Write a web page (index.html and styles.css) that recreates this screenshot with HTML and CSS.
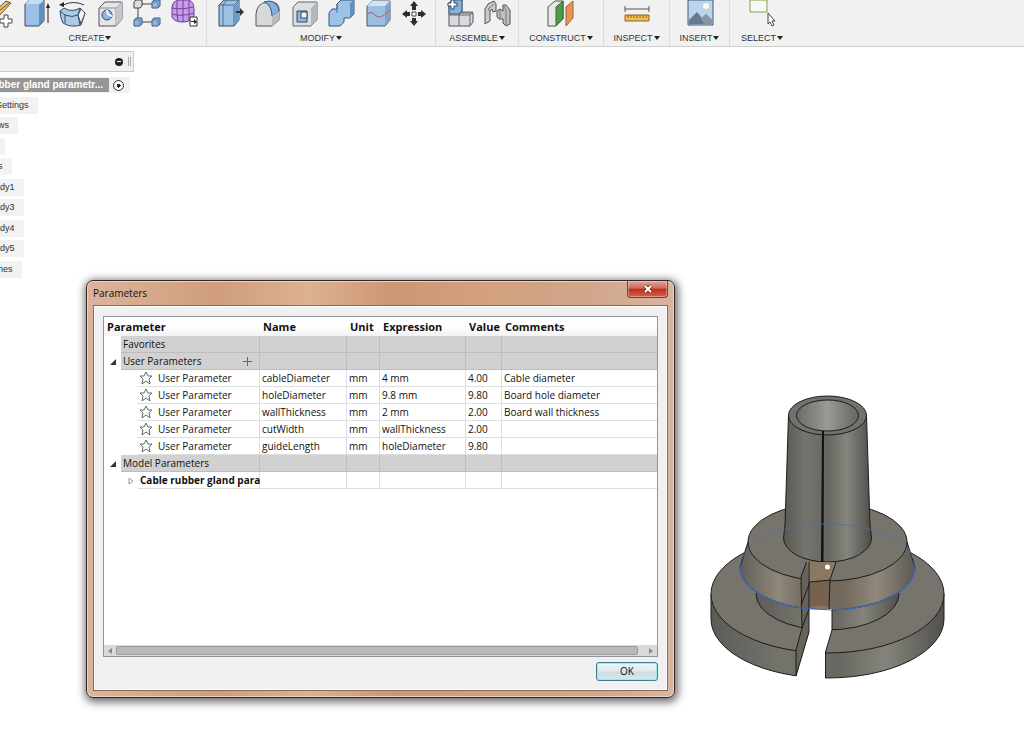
FILE: index.html
```
<!DOCTYPE html>
<html lang="en">
<head>
    <meta charset="UTF-8">
    <meta name="viewport" content="width=device-width, initial-scale=1.0">
    <title>Parameters</title>
    <link rel="stylesheet" href="styles.css">
</head>
<body>
    <header class="toolbar">
        <section class="group group-create">
            <div class="icons">
                <!-- sketch -->
                <svg class="icon" viewBox="0 0 28 28"><path d="M8 14L22 1L27 3L15 16Z" fill="#f3c25b" stroke="#555"/><path d="M10 15L25 3M5 21H18" stroke="#555" fill="none"/><path d="M20 15h4v4h4v4h-4v4h-4v-4h-4v-4h4Z" fill="#fff" stroke="#444"/></svg>
                <!-- extrude -->
                <svg class="icon" viewBox="0 0 28 28"><path d="M4 4L8 0H23V21L18 26H4Z" fill="#9cc0e4" stroke="#3c4a5a"/><path d="M4 4H18L23 0H8Z" fill="#c4dcf2"/><path d="M18 5L23 1V21L18 26Z" fill="#5e8fc2"/><path d="M27 23V6" stroke="#222" fill="none"/><path d="M25 8L27 3L29 8Z" fill="#222"/></svg>
                <!-- revolve -->
                <svg class="icon" viewBox="0 0 28 28"><path d="M2 11L6 8Q14 13 22 8L27 13L23 25Q13 28 5 23L3 18Z" fill="#a9c9e8" stroke="#3c4a5a"/><path d="M2 11L7 15Q14 18 20 15L22 8M7 15V23M20 15L22 25" fill="none" stroke="#3c4a5a"/><path d="M20 15L23 9L27 13L23 24Z" fill="#edf4fb" stroke="#3c4a5a"/><path d="M5 5Q16 0 26 5" fill="none" stroke="#333"/><path d="M1 5L6 2V7Z" fill="#222"/></svg>
                <!-- hole -->
                <svg class="icon" viewBox="0 0 28 28"><path d="M4 8L10 2H27V19L21 26H4Z" fill="#e3e6e9" stroke="#555"/><path d="M4 8H21V26M21 8L27 2" fill="none" stroke="#8b8f94"/><path d="M21 8L27 2V19L21 26Z" fill="#c3c7cb"/><circle cx="12" cy="15" r="5" fill="#8db7e0" stroke="#3c4a5a"/><path d="M12 10Q12 15 17 16" stroke="#eef5fc" stroke-width="2" fill="none"/></svg>
                <!-- pattern -->
                <svg class="icon" viewBox="0 0 28 28"><path d="M8 4H20M6 8V18M8 22H20" stroke="#444" fill="none"/><path d="M2 2L4 0H10V6L8 8H2Z" fill="#ddd" stroke="#444"/><path d="M20 2L22 0H28V6L26 8H20ZM2 20L4 18H10V24L8 26H2ZM20 20L22 18H28V24L26 26H20Z" fill="#8db7e0" stroke="#3c5a7c"/><path d="M20 2H26V8M2 20H8V26M20 20H26V26" stroke="#5b83ad" fill="none"/></svg>
                <!-- form -->
                <svg class="icon" viewBox="0 0 28 28"><path d="M3 7Q4 0 11 0H20Q25 2 25 9V16Q22 22 14 22Q5 22 3 17Z" fill="#c79be9" stroke="#6c3d96"/><path d="M3 8Q12 10 24 7M3 14Q12 17 25 13M8 1Q7 12 9 21M14 0V22M20 1V21" fill="none" stroke="#75439f"/><path d="M21 17H28V26H21Z" fill="#fff" stroke="#333"/><path d="M22 21H25V19L28 22L25 24V22H22Z" fill="#222"/></svg>
            </div>
            <button class="menu-btn">CREATE <span class="caret"></span></button>
        </section>
        <section class="group group-modify">
            <div class="icons">
                <!-- press pull -->
                <svg class="icon" viewBox="0 0 28 28"><path d="M4 5L9 0H24V20L19 26H4Z" fill="#9cc1e6" stroke="#3c4a5a"/><path d="M8 26V5L12 0M4 5H19V26M19 5L24 0" fill="none" stroke="#4f6f92"/><path d="M20 5L24 1V20L20 24Z" fill="#6c9bcd"/><path d="M21 11H25V8L29 12L25 16V13H21Z" fill="#333"/></svg>
                <!-- fillet -->
                <svg class="icon" viewBox="0 0 28 28"><path d="M4 26V14Q5 3 15 2H20Q27 3 27 9V20L20 26Z" fill="#d6d9dc" stroke="#555"/><path d="M12 2Q20 5 20 16L27 11Q26 2 17 1Z" fill="#82b1e0" stroke="#3c5a7c"/><path d="M20 16L27 11V20L20 26Z" fill="#b8bcc0"/></svg>
                <!-- shell -->
                <svg class="icon" viewBox="0 0 28 28"><path d="M4 7L9 2H28V20L22 26H4Z" fill="#dcdfe1" stroke="#666"/><path d="M22 8L28 2V20L22 26Z" fill="#b5b8bb"/><path d="M8 11H18V22H8Z" fill="#8db7e0" stroke="#34475c"/><path d="M12 12V18H18V12Z" fill="#edf4fa" stroke="#34475c"/></svg>
                <!-- combine -->
                <svg class="icon" viewBox="0 0 28 28"><path d="M3 13L6 9H11V4L15 0H28V14L24 18H18V22L14 26H3Z" fill="#9cc2e8" stroke="#385474"/><path d="M24 4L28 0M11 13V4" fill="none" stroke="#4c759f"/><path d="M24 4L28 0V14L24 18Z" fill="#5f91c7"/></svg>
                <!-- split -->
                <svg class="icon" viewBox="0 0 28 28"><path d="M4 6L9 1H27V20L22 26H4Z" fill="#9dbfdf" stroke="#44586e"/><path d="M4 6H22L27 1H9Z" fill="#d2e3f3"/><path d="M22 6L27 1V20L22 26Z" fill="#7ea5cb"/><path d="M4 14Q8 11 12 15T21 15L27 10" fill="none" stroke="#b8576a"/></svg>
                <!-- move -->
                <svg class="icon" viewBox="0 0 28 28"><path d="M14 1L18 6H16V10H12V6H10ZM14 26L10 21H12V18H16V21H18ZM2 14L7 10V12H10V16H7V18ZM26 14L21 18V16H18V12H21V10Z" fill="#2e2e2e"/><path d="M12 12H16V16H12Z" fill="#fff" stroke="#444"/></svg>
            </div>
            <button class="menu-btn">MODIFY <span class="caret"></span></button>
        </section>
        <section class="group group-assemble">
            <div class="icons">
                <!-- new component -->
                <svg class="icon" viewBox="0 0 28 28"><path d="M4 3L7 0H17V13H28V22L25 26H4Z" fill="#d7dbe0" stroke="#555"/><path d="M4 3L7 0H17V11L14 14H4Z" fill="#86b1dc" stroke="#3c5a7c"/><path d="M4 15H14V26M14 15L17 12H28L25 15H14M25 15V26" fill="none" stroke="#667"/><path d="M6 0H9V3H12V6H9V9H6V6H3V3H6Z" fill="#fff" stroke="#345"/></svg>
                <!-- joint -->
                <svg class="icon" viewBox="0 0 28 28"><path d="M3 9L6 4L12 1L14 4V11L11 12L10 9L8 11V21L3 24Z" fill="#c6cace" stroke="#555"/><path d="M8 11L6 9L12 4" fill="none" stroke="#777"/><path d="M15 11L18 9L21 11V5L24 5L28 10V24L24 26L21 23V19L17 19L15 17Z" fill="#bcc1c6" stroke="#555"/><path d="M21 5L24 10V25M18 10V19" fill="none" stroke="#777"/></svg>
            </div>
            <button class="menu-btn">ASSEMBLE <span class="caret"></span></button>
        </section>
        <section class="group group-construct">
            <div class="icons">
                <!-- offset plane -->
                <svg class="icon" viewBox="0 0 28 28"><path d="M1 7L8 1H16V19L9 26H1Z" fill="#e7e9e9" stroke="#555"/><path d="M9 7L16 1V19L9 26Z" fill="#4e9a45" stroke="#356b30"/><path d="M19 7L26 1V18L19 26Z" fill="#e8935a" stroke="#a35e30"/></svg>
            </div>
            <button class="menu-btn">CONSTRUCT <span class="caret"></span></button>
        </section>
        <section class="group group-inspect">
            <div class="icons">
                <!-- measure -->
                <svg class="icon" viewBox="0 0 28 28"><path d="M2 9H26M2 6V12M26 6V12" stroke="#555" fill="none"/><path d="M2 15H26V21H2Z" fill="#f1bd55" stroke="#94631c"/><path d="M5 15V18M8 15V18M11 15V18M14 15V18M17 15V18M20 15V18M23 15V18" stroke="#94631c"/></svg>
            </div>
            <button class="menu-btn">INSPECT <span class="caret"></span></button>
        </section>
        <section class="group group-insert">
            <div class="icons">
                <!-- decal -->
                <svg class="icon" viewBox="0 0 28 28"><path d="M2 0H27V25H2Z" fill="#b9d6ee" stroke="#46566a"/><circle cx="20" cy="6" r="3" fill="#fdfbe6"/><path d="M3 20L11 12L16 18L20 14L26 20V24H3Z" fill="#68798e"/><path d="M11 12L14 17L18 24H26V20L20 14L16 18Z" fill="#8795a5"/></svg>
            </div>
            <button class="menu-btn">INSERT <span class="caret"></span></button>
        </section>
        <section class="group group-select">
            <div class="icons">
                <!-- select -->
                <svg class="icon" viewBox="0 0 28 28"><path d="M2 0H19V12H2Z" fill="#f6f8f3" stroke="#7ba34c"/><path d="M20 13V24L22 22L24 26L26 25L24 21H27Z" fill="#fff" stroke="#444"/></svg>
            </div>
            <button class="menu-btn">SELECT <span class="caret"></span></button>
        </section>
    </header>

    <main class="workspace">
        <nav class="browser">
            <div class="browser-head">
                <button class="collapse" aria-label="Collapse"></button>
                <span class="grip"></span>
            </div>
            <div class="browser-root">
                <span class="root-name">bber gland parametr...</span>
                <label class="activate"><input type="radio" name="active" aria-label="Activate component" checked></label>
            </div>
            <ul class="tree">
                <li class="settings">Settings</li>
                <li class="short">ws</li>
                <li class="blank"></li>
                <li class="short">s</li>
                <li>dy1</li>
                <li>dy3</li>
                <li>dy4</li>
                <li>dy5</li>
                <li class="short">nes</li>
            </ul>
        </nav>

        <!-- cable gland model -->
        <svg class="model" viewBox="0 0 260 305">
            <defs>
                <linearGradient id="side"><stop offset="0" stop-color="#5c5b56"/><stop offset=".3" stop-color="#74736c"/><stop offset=".55" stop-color="#686761"/><stop offset=".75" stop-color="#85847c"/><stop offset="1" stop-color="#51504b"/></linearGradient>
                <linearGradient id="tube"><stop offset="0" stop-color="#595853"/><stop offset=".25" stop-color="#75746e"/><stop offset=".5" stop-color="#66655f"/><stop offset=".72" stop-color="#85847d"/><stop offset="1" stop-color="#4e4d49"/></linearGradient>
                <linearGradient id="cone"><stop offset="0" stop-color="#605e58"/><stop offset=".22" stop-color="#8e887a"/><stop offset=".4" stop-color="#6e6759"/><stop offset=".6" stop-color="#716a5d"/><stop offset=".78" stop-color="#91897b"/><stop offset="1" stop-color="#5b5953"/></linearGradient>
                <linearGradient id="bore"><stop offset="0" stop-color="#6c6b66"/><stop offset=".5" stop-color="#9a9992"/><stop offset="1" stop-color="#65645e"/></linearGradient>
            </defs>
            <g stroke="#1c1c1a" stroke-linejoin="round">
                <path d="M11 209V234A116.500 59 0 0 0 244 234V209Z" fill="url(#side)"/>
                <ellipse cx="127.500" cy="209" rx="116.500" ry="59" fill="#76746d"/>
                <path d="M56 209A71.500 36 0 0 0 199 209L190 190H65Z" fill="url(#side)"/>
                <path d="M48 157L40 182A87.500 43 0 0 0 215 182L207 157Z" fill="url(#cone)"/>
                <ellipse cx="127.500" cy="157" rx="79.500" ry="39" fill="#77746c"/>
                <path d="M88.500 30L85 140L83.500 153A44 24 0 0 0 171.500 153L170 140L166.500 30Z" fill="url(#tube)"/>
                <ellipse cx="127.500" cy="30.500" rx="39" ry="19.500" fill="#72716b"/>
                <ellipse cx="127.500" cy="30.500" rx="31" ry="15.500" fill="url(#bore)"/>
            </g>
            <path d="M122 46L121 177H123.500L124 46Z" fill="#111"/>
            <path d="M40 182A87.500 43 0 0 0 215 182" fill="none" stroke="#3f68b5" stroke-width="1.500"/>
            <path d="M40 182A87.500 43 0 0 1 215 182" fill="none" stroke="#566da2" stroke-width=".800"/>
            <!-- slot through the flanges -->
            <path d="M109 224H132V245L125.500 267V298H94L96 291L109 247Z" fill="#fff"/>
            <path d="M107 177H136L130 195L129 224Q118 225 109 224Z" fill="#8b7861"/>
            <path d="M109 197L130 195L129 222Q118 219 109 223Z" fill="#76624d"/>
            <path d="M107 177L109 197V247L96 291V265L102 243L101 192Z" fill="#67625a"/>
            <path d="M106.500 177L101 192L102 243L96 265V291L109 247V177M101 220L110 197L130 195L136 177M130 195L129 224M109 224L102 243M132 225V245L125.500 267V293" fill="none" stroke="#1c1c1a"/>
            <path d="M101 223L132 225" stroke="#3f68b5" fill="none"/>
            <circle cx="127.500" cy="182" r="2.500" fill="#fff"/>
        </svg>

        <section class="dialog" role="dialog" aria-labelledby="dialog-title">
            <div class="titlebar">
                <h1 id="dialog-title">Parameters</h1>
                <button class="close" aria-label="Close"><svg viewBox="0 0 10 8"><path d="M2 1L8 7M8 1L2 7" stroke="#7b3026" stroke-width="4"/><path d="M2 1L8 7M8 1L2 7" stroke="#fff" stroke-width="2"/></svg></button>
            </div>
            <div class="dialog-body">
                <div class="grid">
                    <table>
                        <colgroup>
                            <col class="c-param"><col class="c-name"><col class="c-unit"><col class="c-expr"><col class="c-value"><col>
                        </colgroup>
                        <thead>
                            <tr><th>Parameter</th><th>Name</th><th>Unit</th><th>Expression</th><th>Value</th><th>Comments</th></tr>
                        </thead>
                        <tbody>
                            <tr class="section"><td><div class="cell"><span class="gutter"></span><div class="label">Favorites</div></div></td><td></td><td></td><td></td><td></td><td></td></tr>
                            <tr class="section"><td><div class="cell"><span class="gutter"><i class="open"></i></span><div class="label">User Parameters<button class="add" aria-label="Add user parameter"></button></div></div></td><td></td><td></td><td></td><td></td><td></td></tr>
                            <tr><td><div class="cell param"><div class="label"><svg class="star" viewBox="0 0 14 14"><path d="M7 1L9 5L13 5L10 8L11 13L7 10L3 13L4 8L1 5L5 5Z"/></svg>User Parameter</div></div></td><td>cableDiameter</td><td>mm</td><td>4 mm</td><td>4.00</td><td>Cable diameter</td></tr>
                            <tr><td><div class="cell param"><div class="label"><svg class="star" viewBox="0 0 14 14"><path d="M7 1L9 5L13 5L10 8L11 13L7 10L3 13L4 8L1 5L5 5Z"/></svg>User Parameter</div></div></td><td>holeDiameter</td><td>mm</td><td>9.8 mm</td><td>9.80</td><td>Board hole diameter</td></tr>
                            <tr><td><div class="cell param"><div class="label"><svg class="star" viewBox="0 0 14 14"><path d="M7 1L9 5L13 5L10 8L11 13L7 10L3 13L4 8L1 5L5 5Z"/></svg>User Parameter</div></div></td><td>wallThickness</td><td>mm</td><td>2 mm</td><td>2.00</td><td>Board wall thickness</td></tr>
                            <tr><td><div class="cell param"><div class="label"><svg class="star" viewBox="0 0 14 14"><path d="M7 1L9 5L13 5L10 8L11 13L7 10L3 13L4 8L1 5L5 5Z"/></svg>User Parameter</div></div></td><td>cutWidth</td><td>mm</td><td>wallThickness</td><td>2.00</td><td></td></tr>
                            <tr><td><div class="cell param"><div class="label"><svg class="star" viewBox="0 0 14 14"><path d="M7 1L9 5L13 5L10 8L11 13L7 10L3 13L4 8L1 5L5 5Z"/></svg>User Parameter</div></div></td><td>guideLength</td><td>mm</td><td>holeDiameter</td><td>9.80</td><td></td></tr>
                            <tr class="section"><td><div class="cell"><span class="gutter"><i class="open"></i></span><div class="label">Model Parameters</div></div></td><td></td><td></td><td></td><td></td><td></td></tr>
                            <tr><td><div class="cell component"><svg class="closed" viewBox="0 0 6 8"><path d="M1 1L5 4L1 7Z"/></svg><div class="label">Cable rubber gland para</div></div></td><td></td><td></td><td></td><td></td><td></td></tr>
                        </tbody>
                    </table>
                    <div class="scrollbar">
                        <button class="arrow" aria-label="Scroll left"><svg viewBox="0 0 6 8"><path d="M5 1L1 4L5 7Z"/></svg></button>
                        <span class="thumb"></span>
                        <button class="arrow" aria-label="Scroll right"><svg viewBox="0 0 6 8"><path d="M1 1L5 4L1 7Z"/></svg></button>
                    </div>
                </div>
                <div class="actions">
                    <button class="ok">OK</button>
                </div>
            </div>
        </section>
    </main>
</body>
</html>
```
FILE: styles.css
```
* {
    box-sizing: border-box;
}

body {
    margin: 0;
    min-height: 100vh;
    display: flex;
    flex-direction: column;
    background-color: #fff;
    font-family: "Liberation Sans", Arial, sans-serif;
    font-size: 9px;
    color: #333;
    overflow: hidden;
}

button {
    font-family: inherit;
    padding: 0;
    border: none;
    background: none;
}

/* toolbar */
.toolbar {
    display: flex;
    background-color: #f1f1f1;
    border-bottom: 1px solid #cfcfcf;
}

.group {
    display: flex;
    flex-direction: column;
    align-items: center;
    flex-shrink: 0;
    gap: 4px;
    padding-bottom: 2px;
    border-right: 1px solid #dcdcdc;
}

.group-create {
    width: 233px;
    margin-left: -26px;
}

.group-modify {
    width: 229px;
}

.group-assemble {
    width: 83px;
}

.group-construct {
    width: 85px;
}

.group-inspect {
    width: 66px;
}

.group-insert {
    width: 60px;
}

.group-select {
    width: 64px;
    border-right: none;
}

.icons {
    display: flex;
    gap: 9px;
}

.icon {
    width: 28px;
    height: 28px;
    overflow: visible;
}

.menu-btn {
    display: flex;
    align-items: center;
    gap: 1px;
    font-size: 9px;
    line-height: 12px;
    color: #333;
}

.caret {
    border: 3px solid transparent;
    border-top: 4px solid #222;
    border-bottom: none;
}

/* browser tree */
.workspace {
    position: relative;
    flex: 1;
}

.browser {
    display: flex;
    flex-direction: column;
    align-items: flex-start;
    padding-top: 4px;
}

.browser-head {
    display: flex;
    align-items: center;
    justify-content: flex-end;
    gap: 5px;
    width: 134px;
    height: 21px;
    padding-right: 2px;
    background-color: #f0f0f0;
    border: 1px solid #ccc;
    border-left: none;
}

.collapse {
    display: flex;
    align-items: center;
    justify-content: center;
    width: 8px;
    height: 8px;
    border-radius: 50%;
    background-color: #222;
}

.collapse::after {
    content: "";
    width: 4px;
    height: 1px;
    background-color: #fff;
}

.grip {
    width: 3px;
    height: 9px;
    border: solid #aaa;
    border-width: 0 1px;
}

.browser-root {
    display: flex;
    align-items: center;
    height: 16px;
    margin-top: 5px;
    background-color: #f1f1f1;
}

.root-name {
    display: flex;
    justify-content: flex-end;
    width: 109px;
    height: 14px;
    padding-right: 6px;
    line-height: 14px;
    font-size: 10px;
    font-weight: bold;
    white-space: nowrap;
    color: #fff;
    background-color: #969696;
}

.activate {
    display: flex;
    padding: 0 6px 0 4px;
}

.activate input {
    appearance: none;
    width: 11px;
    height: 11px;
    margin: 0;
    border: 1px solid #333;
    border-radius: 50%;
    background: radial-gradient(circle, #222 0 2px, #fff 2px);
}

.tree {
    display: flex;
    flex-direction: column;
    align-items: flex-start;
    margin: 4px 0 0;
    padding: 0;
    list-style: none;
}

.tree li {
    height: 17px;
    margin-bottom: 3px;
    padding-right: 9px;
    line-height: 17px;
    background-color: #f2f2f2;
}

.tree li:nth-child(even) {
    margin-bottom: 4px;
}

.tree .settings {
    margin-left: -4px;
}

.tree .short {
    margin-left: -2px;
}

.tree .blank {
    padding-right: 5px;
}

/* model */
.model {
    position: absolute;
    left: 700px;
    top: 338px;
    width: 260px;
    height: 305px;
}

/* dialog */
.dialog {
    position: absolute;
    left: 86px;
    top: 233px;
    width: 589px;
    padding: 0 6px 6px;
    border: 1px solid #33251f;
    border-radius: 7px;
    background: linear-gradient(to right, #dcb49c, #cf9d7c 22%, #ddb193 38%, #cc9773 52%, #d3a17e 68%, #d0a68c 86%, #d8b5a0);
    box-shadow: inset 0 0 0 1px #ecd3c4, 1px 2px 8px 2px rgba(0, 0, 0, 0.6);
    font-family: "Open Sans", sans-serif;
    font-size: 10px;
    color: #111;
}

.titlebar {
    display: flex;
    justify-content: space-between;
    align-items: flex-start;
    height: 24px;
}

.titlebar h1 {
    margin: 0;
    font-size: 10px;
    font-weight: normal;
    line-height: 24px;
}

.close {
    display: flex;
    align-items: center;
    justify-content: center;
    width: 41px;
    height: 17px;
    border: 1px solid #7d3a30;
    border-top: none;
    border-radius: 0 0 4px 4px;
    background: linear-gradient(#e3a394, #d0695a 45%, #bd2f1c 50%, #d8604a);
    box-shadow: inset 0 0 0 1px rgba(255, 255, 255, 0.35);
}

.close svg {
    width: 10px;
    height: 8px;
}

.dialog-body {
    padding: 10px 9px 9px;
    border: 1px solid #8a6a59;
    background-color: #f0f0f0;
    box-shadow: inset 0 0 0 1px #fff;
}

.grid {
    display: flex;
    flex-direction: column;
    justify-content: space-between;
    min-height: 341px;
    border: 1px solid #8f959c;
    background-color: #fff;
}

table {
    width: 100%;
    table-layout: fixed;
    border-collapse: separate;
    border-spacing: 0;
}

.c-param {
    width: 156px;
}

.c-name {
    width: 87px;
}

.c-unit {
    width: 33px;
}

.c-expr {
    width: 86px;
}

.c-value {
    width: 36px;
}

th {
    height: 19px;
    padding: 0 3px;
    font-size: 11px;
    line-height: 18px;
    text-align: left;
    background: linear-gradient(#fff 50%, #f1f2f4);
}

td {
    height: 17px;
    padding: 0 2px;
    line-height: 16px;
    white-space: nowrap;
    border-right: 1px solid #dedede;
    border-bottom: 1px solid #dedede;
}

td:first-child {
    padding: 0;
    border-bottom: none;
}

td:last-child {
    border-right: none;
}

.section td {
    background-color: #d1d1d1;
    border-color: #bdbdbd;
}

.cell {
    display: flex;
    align-items: center;
    height: 17px;
}

.gutter {
    display: flex;
    align-items: center;
    justify-content: center;
    align-self: stretch;
    width: 17px;
    background-color: #fff;
}

.label {
    display: flex;
    flex: 1;
    align-items: center;
    height: 17px;
    padding-left: 2px;
    border-bottom: 1px solid #dedede;
}

.section .label {
    border-color: #bdbdbd;
}

.open {
    border: 3px solid #333;
    border-top-color: transparent;
    border-left-color: transparent;
}

.add {
    width: 9px;
    height: 9px;
    margin: 0 7px 0 auto;
    background: linear-gradient(#666, #666) center / 9px 1px no-repeat, linear-gradient(#666, #666) center / 1px 9px no-repeat;
}

.param {
    padding-left: 33px;
}

.star {
    width: 14px;
    height: 14px;
    margin-right: 5px;
    fill: #fff;
    stroke: #666;
}

.component {
    gap: 4px;
    padding-left: 24px;
    font-weight: bold;
}

.closed {
    width: 6px;
    height: 8px;
    flex-shrink: 0;
    fill: #fff;
    stroke: #999;
}

.scrollbar {
    display: flex;
    align-items: center;
    height: 11px;
    background-color: #d9d9d9;
}

.arrow {
    display: flex;
    align-items: center;
    justify-content: center;
    width: 12px;
    height: 11px;
}

.arrow svg {
    width: 6px;
    height: 8px;
    fill: #888;
}

.thumb {
    flex: 1;
    height: 9px;
    margin-right: 7px;
    border: 1px solid #9d9d9d;
    border-radius: 2px;
    background-color: #b9b9b9;
}

.actions {
    display: flex;
    justify-content: flex-end;
    padding-top: 5px;
}

.ok {
    width: 62px;
    height: 19px;
    border: 1px solid #3d7f96;
    border-radius: 3px;
    background: linear-gradient(#f0f5f7, #e0e9ed 48%, #cbdce3 52%, #d5e6ed);
    box-shadow: inset 0 0 0 1px #a6e3f5;
    font-size: 10px;
    line-height: 15px;
    color: #111;
}
```
